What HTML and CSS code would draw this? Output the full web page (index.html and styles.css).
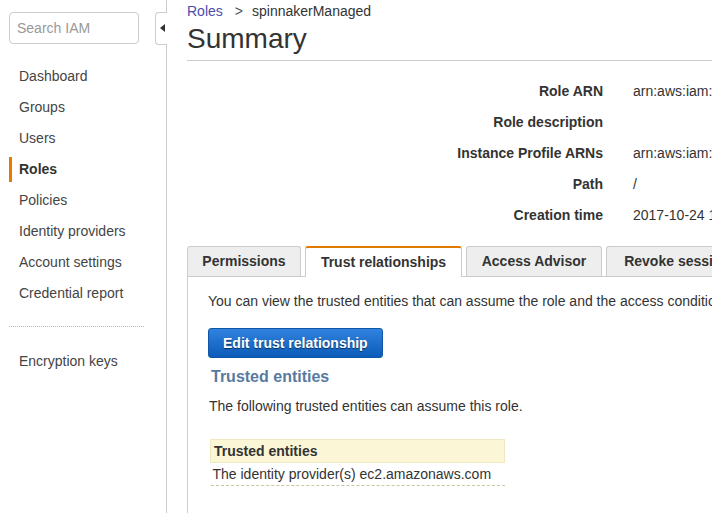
FILE: index.html
```html
<!DOCTYPE html>
<html>
<head>
<meta charset="utf-8">
<link rel="stylesheet" href="styles.css">
</head>
<body>
<div class="page">
  <aside class="sidebar">
    <div class="search"><input type="text" placeholder="Search IAM"></div>
    <nav class="nav">
      <a>Dashboard</a>
      <a>Groups</a>
      <a>Users</a>
      <a class="active">Roles</a>
      <a>Policies</a>
      <a>Identity providers</a>
      <a>Account settings</a>
      <a>Credential report</a>
    </nav>
    <div class="sep"></div>
    <nav class="nav">
      <a>Encryption keys</a>
    </nav>
    <div class="toggle"><span class="tri"></span></div>
  </aside>
  <main class="main">
    <div class="crumbs"><a class="link">Roles</a><span class="chev">&gt;</span><span>spinnakerManaged</span></div>
    <h1 class="title">Summary</h1>
    <dl class="details">
      <dt>Role ARN</dt><dd>arn:aws:iam::123456789012:role/spinnakerManaged</dd>
      <dt>Role description</dt><dd></dd>
      <dt>Instance Profile ARNs</dt><dd>arn:aws:iam::123456789012:instance-profile/spinnakerManaged</dd>
      <dt>Path</dt><dd>/</dd>
      <dt>Creation time</dt><dd>2017-10-24 11:52 UTC-0700</dd>
    </dl>
    <div class="tabs">
      <div class="tab t1">Permissions</div>
      <div class="tab t2 active">Trust relationships</div>
      <div class="tab t3">Access Advisor</div>
      <div class="tab t4">Revoke sessions</div>
    </div>
    <section class="panel">
      <p class="intro">You can view the trusted entities that can assume the role and the access conditions for the assume role policy.</p>
      <button class="btn">Edit trust relationship</button>
      <h2 class="subhead">Trusted entities</h2>
      <p class="desc">The following trusted entities can assume this role.</p>
      <table class="ent">
        <thead><tr><th>Trusted entities</th></tr></thead>
        <tbody><tr><td>The identity provider(s) ec2.amazonaws.com</td></tr></tbody>
      </table>
    </section>
  </main>
</div>
</body>
</html>
```
FILE: styles.css
```css
html, body {
  margin: 0;
  padding: 0;
  overflow: hidden;
  background: #fff;
}
body {
  font-family: "Liberation Sans", Arial, sans-serif;
  font-size: 14px;
  color: #333;
  width: 712px;
  height: 513px;
}
.page {
  display: flex;
  height: 513px;
}
.sidebar {
  position: relative;
  width: 166px;
  flex: 0 0 166px;
  border-right: 1px solid #ccc;
  box-sizing: content-box;
}
.search {
  padding: 12px 0 0 9px;
}
.search input {
  box-sizing: border-box;
  width: 130px;
  height: 32px;
  border: 1px solid #ccc;
  border-radius: 4px;
  padding: 0 7px;
  font-family: "Liberation Sans", Arial, sans-serif;
  font-size: 14px;
  color: #333;
  outline: none;
}
.search input::placeholder {
  color: #999;
}
.nav {
  display: flex;
  flex-direction: column;
}
.sidebar > .nav:first-of-type {
  margin-top: 17px;
}
.nav a {
  display: block;
  height: 31px;
  line-height: 31px;
  padding-left: 19px;
  color: #444;
  font-size: 14px;
}
.nav a.active {
  font-weight: bold;
  color: #333;
  position: relative;
}
.nav a.active::before {
  content: "";
  position: absolute;
  left: 9px;
  top: 3px;
  width: 3px;
  height: 25px;
  background: #e67a00;
}
.sep {
  margin: 17px 0 19px 9px;
  width: 135px;
  border-top: 1px dotted #bbb;
}
.toggle {
  position: absolute;
  right: -1px;
  top: 12px;
  width: 11px;
  height: 31px;
  border: 1px solid #ccc;
  border-right: none;
  border-radius: 4px 0 0 4px;
  background: #fff;
}
.tri {
  position: absolute;
  left: 4px;
  top: 11px;
  width: 0;
  height: 0;
  border-top: 4px solid transparent;
  border-bottom: 4px solid transparent;
  border-right: 5px solid #333;
}
.main {
  flex: 1 0 auto;
  padding-left: 20px;
  min-width: 0;
  width: 700px;
}
.crumbs {
  height: 22px;
  line-height: 22px;
  font-size: 14px;
  color: #333;
  white-space: nowrap;
}
.crumbs .link {
  color: #4a4cb0;
}
.crumbs .chev {
  margin: 0 9px 0 12px;
  color: #555;
}
.title {
  margin: 0;
  font-size: 28px;
  font-weight: normal;
  line-height: 34px;
  color: #333;
  padding-bottom: 4px;
  border-bottom: 1px solid #ccc;
}
.details {
  display: grid;
  grid-template-columns: 416px auto;
  column-gap: 30px;
  margin: 15px 0 0;
  white-space: nowrap;
}
.details dt {
  font-weight: bold;
  text-align: right;
  line-height: 31px;
  color: #333;
}
.details dd {
  margin: 0;
  line-height: 31px;
  color: #333;
}
.tabs {
  display: flex;
  gap: 4px;
  margin-top: 15px;
  border-bottom: 1px solid #ccc;
  white-space: nowrap;
}
.tab {
  box-sizing: border-box;
  flex: 0 0 auto;
  height: 30px;
  line-height: 29px;
  text-align: center;
  background: #eee;
  border: 1px solid #ccc;
  border-bottom: none;
  border-radius: 3px 3px 0 0;
  font-weight: bold;
  color: #333;
  margin-bottom: -1px;
}
.t1 { width: 114px; }
.t2 { width: 157px; }
.t3 { width: 136px; }
.t4 { width: 150px; }
.tab.active {
  background: #fff;
  border-top: 2px solid #e07b00;
  height: 31px;
  line-height: 28px;
}
.panel {
  border-left: 1px solid #ccc;
  padding: 14px 0 0 20px;
  height: 222px;
}
.intro {
  margin: 0;
  line-height: 20px;
  white-space: nowrap;
  color: #333;
}
.btn {
  display: block;
  margin-top: 17px;
  height: 30px;
  padding: 0 14px;
  border: 1px solid #0e57a8;
  border-radius: 3px;
  background: linear-gradient(#3183df, #0b5bb8);
  color: #fff;
  font-family: "Liberation Sans", Arial, sans-serif;
  font-size: 14px;
  font-weight: bold;
  text-shadow: 0 1px 1px rgba(0, 0, 0, 0.55);
  cursor: pointer;
}
.subhead {
  margin: 9px 0 0 3px;
  font-size: 16px;
  line-height: 20px;
  font-weight: bold;
  color: #587aa0;
}
.desc {
  margin: 9px 0 0 1px;
  line-height: 20px;
  color: #333;
}
.ent {
  margin: 23px 0 0 2px;
  border-collapse: collapse;
  width: 295px;
}
.ent th {
  text-align: left;
  background: #faf6d6;
  border: 1px solid #efe9c2;
  height: 22px;
  padding: 0 3px;
  font-weight: bold;
  color: #333;
}
.ent td {
  padding: 0 2px;
  height: 22px;
  border-bottom: 1px dashed #c9c6a0;
  color: #333;
}
```
